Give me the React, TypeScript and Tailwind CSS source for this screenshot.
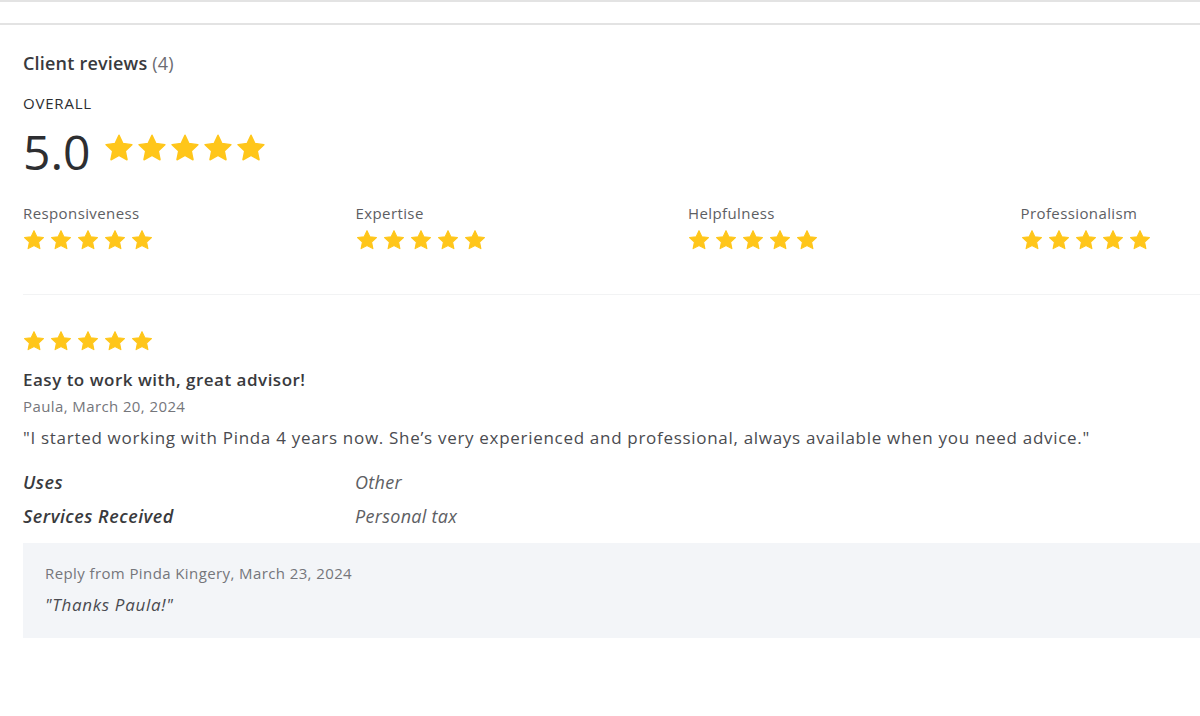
import React from 'react';

const font = { fontFamily: '"Open Sans", Lato, sans-serif' };

function Star({ size }: { size: number }) {
  return (
    <svg width={size} height={size} viewBox="0 0 24 24" className="shrink-0">
      <path
        d="M12 1.8l3.1 6.6 7.2.9-5.3 5 1.4 7.1L12 17.9l-6.4 3.5L7 14.3 1.7 9.3l7.2-.9z"
        fill="#ffc61a"
        stroke="#ffc61a"
        strokeWidth="1.2"
        strokeLinejoin="round"
      />
    </svg>
  );
}

function Stars({ size, gap }: { size: number; gap: string }) {
  return (
    <div className={`flex ${gap}`}>
      {[0, 1, 2, 3, 4].map((i) => (
        <Star key={i} size={size} />
      ))}
    </div>
  );
}

const categories = ['Responsiveness', 'Expertise', 'Helpfulness', 'Professionalism'];

export default function App() {
  return (
    <div className="min-h-screen w-[1200px] overflow-hidden bg-white text-[#393a3d]" style={font}>
      <div className="h-[25px] border-y-2 border-[#e3e3e3]" />

      <div className="pl-[23px] w-[1360px]">
        <h2 className="mt-[26px] text-[18px] font-semibold leading-6 tracking-[0.2px]">
          Client reviews <span className="font-normal text-[#6b6c72]">(4)</span>
        </h2>
        <div className="mt-[18px] text-[15px] font-medium uppercase leading-5 tracking-[0.8px] text-[#2d2e31]">Overall</div>

        <div className="mt-[11px] flex items-center gap-[13px]">
          <span className="text-[48px] font-normal leading-[56px] text-[#2d2e31]">5.0</span>
          <div className="-mt-[8px]">
            <Stars size={30} gap="gap-[3px]" />
          </div>
        </div>

        <div className="mt-[23px] grid grid-cols-4 w-[1330px]">
          {categories.map((c) => (
            <div key={c}>
              <div className="text-[15px] leading-5 tracking-[0.4px] text-[#5d5e63]">{c}</div>
              <div className="mt-[6px]">
                <Stars size={22} gap="gap-[5px]" />
              </div>
            </div>
          ))}
        </div>

        <div className="mt-[43px] border-t border-[#f2f3f4]" />

        <div className="mt-[35px]">
          <Stars size={22} gap="gap-[5px]" />
        </div>
        <h3 className="mt-[16px] text-[17px] font-semibold leading-6 tracking-[0.5px]">Easy to work with, great advisor!</h3>
        <div className="mt-[4px] text-[15px] leading-5 tracking-[0.4px] text-[#75767b]">Paula, March 20, 2024</div>
        <p className="mt-[10px] text-[17px] leading-6 text-[#4a4b50] tracking-[0.7px]">
          "I started working with Pinda 4 years now. She’s very experienced and professional, always available when you need advice."
        </p>

        <div className="mt-[20px] grid grid-cols-[332px_1fr] gap-y-[10px] text-[18px] italic leading-6 tracking-[0.3px]">
          <div className="font-semibold tracking-[0.5px]">Uses</div>
          <div className="text-[#5d5e63]">Other</div>
          <div className="font-semibold tracking-[0.5px]">Services Received</div>
          <div className="text-[#5d5e63]">Personal tax</div>
        </div>

        <div className="mt-[15px] h-[95px] bg-[#f3f5f8] pl-[22px] pt-[20px]">
          <div className="text-[15px] leading-5 tracking-[0.4px] text-[#75767b]">Reply from Pinda Kingery, March 23, 2024</div>
          <div className="mt-[10px] text-[17px] italic leading-6 tracking-[0.7px] text-[#4a4b50]">"Thanks Paula!"</div>
        </div>
      </div>
    </div>
  );
}
